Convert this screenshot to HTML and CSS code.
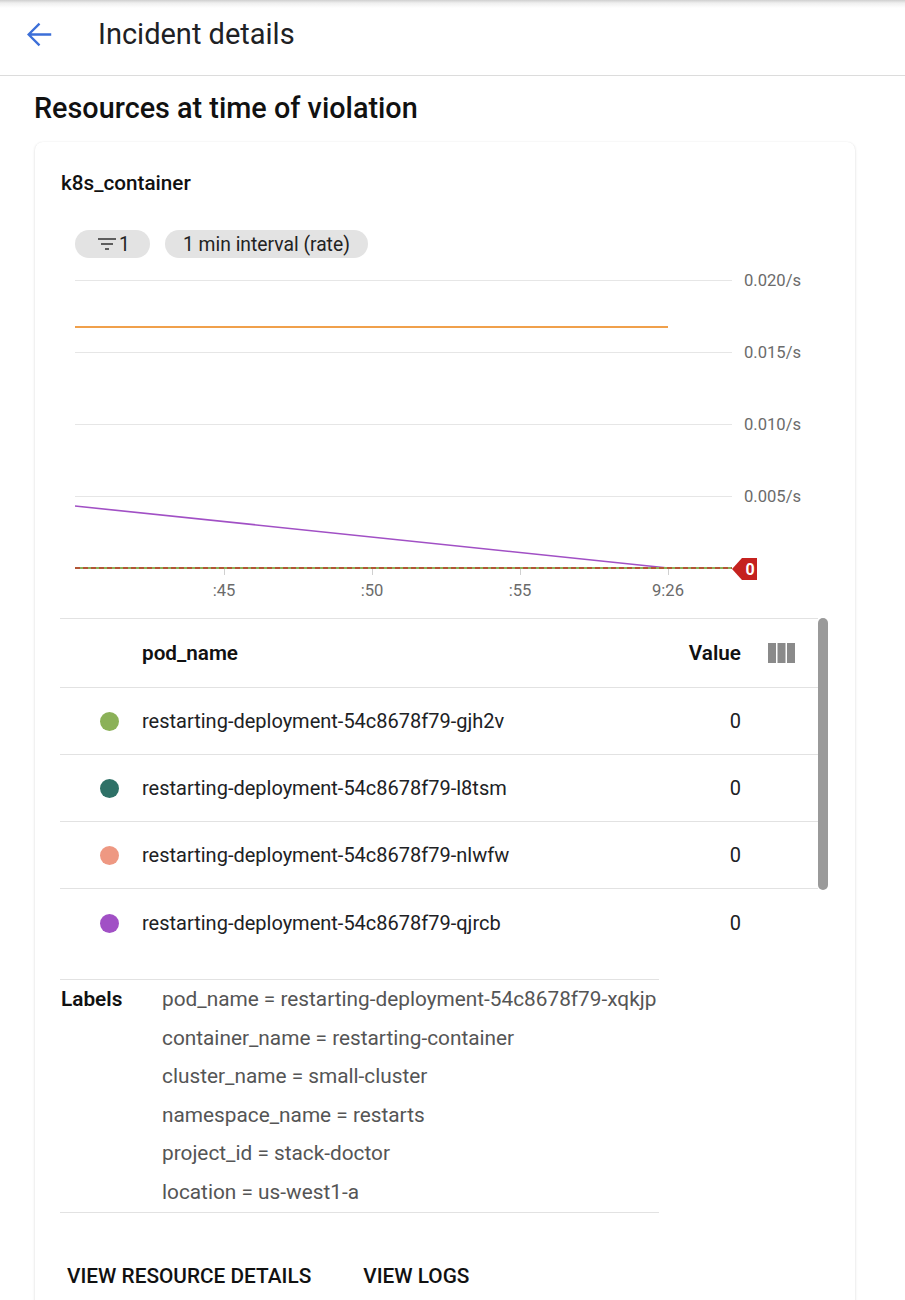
FILE: index.html
```html
<!DOCTYPE html>
<html>
<head>
<meta charset="utf-8">
<link rel="stylesheet" href="styles.css">
</head>
<body>
<header class="topbar">
  <svg class="back" viewBox="4 4 16 16" width="25" height="25"><path d="M19.5 12H5 M12 5l-7 7 7 7" fill="none" stroke="#3c6fd8" stroke-width="1.5"/></svg>
  <span class="page-title">Incident details</span>
</header>
<h1 class="section-title">Resources at time of violation</h1>
<div class="card">
  <div class="card-title">k8s_container</div>
  <div class="chips">
    <span class="chip chip-filter"><svg viewBox="0 0 20 14" width="20" height="14"><path d="M1 2h18M4 7h12M8 12h4" stroke="#333" stroke-width="1.6"/></svg>1</span>
    <span class="chip">1 min interval (rate)</span>
  </div>
  <svg class="chart" viewBox="0 0 770 340" width="770" height="340">
    <g stroke="#e6e6e6" stroke-width="1">
      <line x1="15" y1="15.5" x2="672" y2="15.5"/>
      <line x1="15" y1="87.5" x2="672" y2="87.5"/>
      <line x1="15" y1="159.5" x2="672" y2="159.5"/>
      <line x1="15" y1="231.5" x2="672" y2="231.5"/>
    </g>
    <g class="axis" fill="#6b6b6b" font-size="16.6">
      <text x="684" y="21">0.020/s</text>
      <text x="684" y="93">0.015/s</text>
      <text x="684" y="165">0.010/s</text>
      <text x="684" y="237">0.005/s</text>
    </g>
    <line x1="15" y1="62" x2="608" y2="62" stroke="#f0a04b" stroke-width="2"/>
    <line x1="15" y1="241" x2="608" y2="303" stroke="#a150c5" stroke-width="1.6"/>
    <line x1="15" y1="303" x2="672" y2="303" stroke="#8bb158" stroke-width="2"/>
    <line x1="15" y1="303" x2="672" y2="303" stroke="#c0392b" stroke-width="1.6" stroke-dasharray="5 3"/>
    <g stroke="#d0d0d0" stroke-width="1">
      <line x1="164.5" y1="304" x2="164.5" y2="310"/>
      <line x1="312.5" y1="304" x2="312.5" y2="310"/>
      <line x1="460.5" y1="304" x2="460.5" y2="310"/>
      <line x1="608.5" y1="304" x2="608.5" y2="310"/>
    </g>
    <g class="axis" fill="#6b6b6b" font-size="16.6" text-anchor="middle">
      <text x="164" y="331">:45</text>
      <text x="312" y="331">:50</text>
      <text x="460" y="331">:55</text>
      <text x="608" y="331">9:26</text>
    </g>
    <polygon points="672,304 682,293 697,293 697,315 682,315" fill="#c5221f"/>
    <text x="690" y="310" fill="#fff" font-size="16" font-weight="700" text-anchor="middle">0</text>
  </svg>

  <div class="table-wrap">
    <div class="table">
      <div class="row head">
        <span></span>
        <span class="name">pod_name</span>
        <span class="val">Value</span>
        <span class="colicon"><svg viewBox="0 0 27 20" width="27" height="20"><rect x="0" y="0" width="8" height="20" fill="#8a8a8a"/><rect x="9.5" y="0" width="8" height="20" fill="#8a8a8a"/><rect x="19" y="0" width="8" height="20" fill="#8a8a8a"/></svg></span>
      </div>
      <div class="row">
        <span><i class="dot dot-green"></i></span>
        <span class="name">restarting-deployment-54c8678f79-gjh2v</span>
        <span class="val">0</span><span></span>
      </div>
      <div class="row">
        <span><i class="dot dot-teal"></i></span>
        <span class="name">restarting-deployment-54c8678f79-l8tsm</span>
        <span class="val">0</span><span></span>
      </div>
      <div class="row">
        <span><i class="dot dot-salmon"></i></span>
        <span class="name">restarting-deployment-54c8678f79-nlwfw</span>
        <span class="val">0</span><span></span>
      </div>
      <div class="row last">
        <span><i class="dot dot-purple"></i></span>
        <span class="name">restarting-deployment-54c8678f79-qjrcb</span>
        <span class="val">0</span><span></span>
      </div>
    </div>
    <div class="scrollbar"></div>
  </div>

  <div class="labels">
    <div class="labels-key">Labels</div>
    <div class="labels-list">
      <div>pod_name = restarting-deployment-54c8678f79-xqkjp</div>
      <div>container_name = restarting-container</div>
      <div>cluster_name = small-cluster</div>
      <div>namespace_name = restarts</div>
      <div>project_id = stack-doctor</div>
      <div>location = us-west1-a</div>
    </div>
  </div>

  <div class="actions">
    <span class="btn">VIEW RESOURCE DETAILS</span>
    <span class="btn">VIEW LOGS</span>
  </div>
</div>
</body>
</html>
```
FILE: styles.css
```css
* { box-sizing: border-box; }
html, body { margin: 0; padding: 0; background: #fff; }
body {
  font-family: Roboto, "Liberation Sans", Arial, sans-serif;
  color: #202124;
  width: 905px;
  height: 1300px;
  overflow: hidden;
}
.topbar {
  height: 76px;
  padding-bottom: 7px;
  display: flex;
  align-items: center;
  border-bottom: 1px solid #dcdcdc;
  background: linear-gradient(to bottom, #cfcfcf 0, #efefef 3px, #fff 8px);
}
.back { margin-left: 27px; display: block; }
.page-title {
  margin-left: 46px;
  font-size: 29px;
  line-height: 34px;
  color: #202124;
}
.section-title {
  margin: 15px 0 17px 34px;
  font-size: 28.8px;
  line-height: 34px;
  font-weight: 500;
  color: #111;
}
.card {
  margin-left: 35px;
  width: 820px;
  height: 1200px;
  border-radius: 8px;
  box-shadow: 0 1px 3px rgba(0,0,0,0.14), 0 0 1px rgba(0,0,0,0.08);
  padding: 28px 25px 0 25px;
}
.card-title {
  font-size: 20.7px;
  line-height: 26px;
  font-weight: 500;
  margin-left: 1px;
  color: #111;
}
.chips {
  display: flex;
  gap: 15px;
  margin: 34px 0 0 15px;
}
.chip {
  display: inline-flex;
  align-items: center;
  height: 28px;
  border-radius: 14px;
  background: #e3e3e3;
  padding: 0 18px;
  font-size: 19.3px;
  color: #222;
}
.chip-filter { width: 75px; padding: 0 0 0 22px; gap: 2px; }
.chip-filter svg { display: block; }
.chart { display: block; margin-top: 7px; margin-left: 0; }
.table-wrap {
  display: flex;
  align-items: flex-start;
  margin-top: 13px;
}
.table { width: 758px; border-top: 1px solid #e2e2e2; }
.scrollbar {
  width: 10px;
  height: 272px;
  background: #9a9a9a;
  border-radius: 5px;
}
.row {
  display: grid;
  grid-template-columns: 82px 1fr 100px 77px;
  align-items: center;
  height: 67px;
  border-bottom: 1px solid #e2e2e2;
  font-size: 20px;
  color: #202124;
}
.row.head { height: 69px; font-weight: 600; font-size: 20.7px; color: #111; }
.row.last { border-bottom: none; height: 68px; }
.row .val { text-align: right; }
.colicon { padding-left: 27px; display: flex; }
.colicon svg { display: block; }
.dot {
  display: block;
  width: 19px;
  height: 19px;
  border-radius: 50%;
  margin-left: 40px;
}
.dot-green { background: #8bb158; }
.dot-teal { background: #2e7167; }
.dot-salmon { background: #ee9882; }
.dot-purple { background: #a150c5; }
.labels {
  display: flex;
  width: 599px;
  margin-top: 22px;
  border-top: 1px solid #e2e2e2;
  border-bottom: 1px solid #e2e2e2;
  font-size: 20.8px;
  line-height: 38.6px;
}
.labels-key { width: 102px; padding-left: 1px; font-weight: 600; color: #111; }
.labels-list { color: #555; white-space: nowrap; }
.actions {
  display: flex;
  gap: 38px;
  margin-top: 45px;
}
.btn {
  display: inline-block;
  height: 36px;
  line-height: 36px;
  padding: 0 7px;
  font-size: 20.8px;
  font-weight: 500;
  color: #111;
}
```
